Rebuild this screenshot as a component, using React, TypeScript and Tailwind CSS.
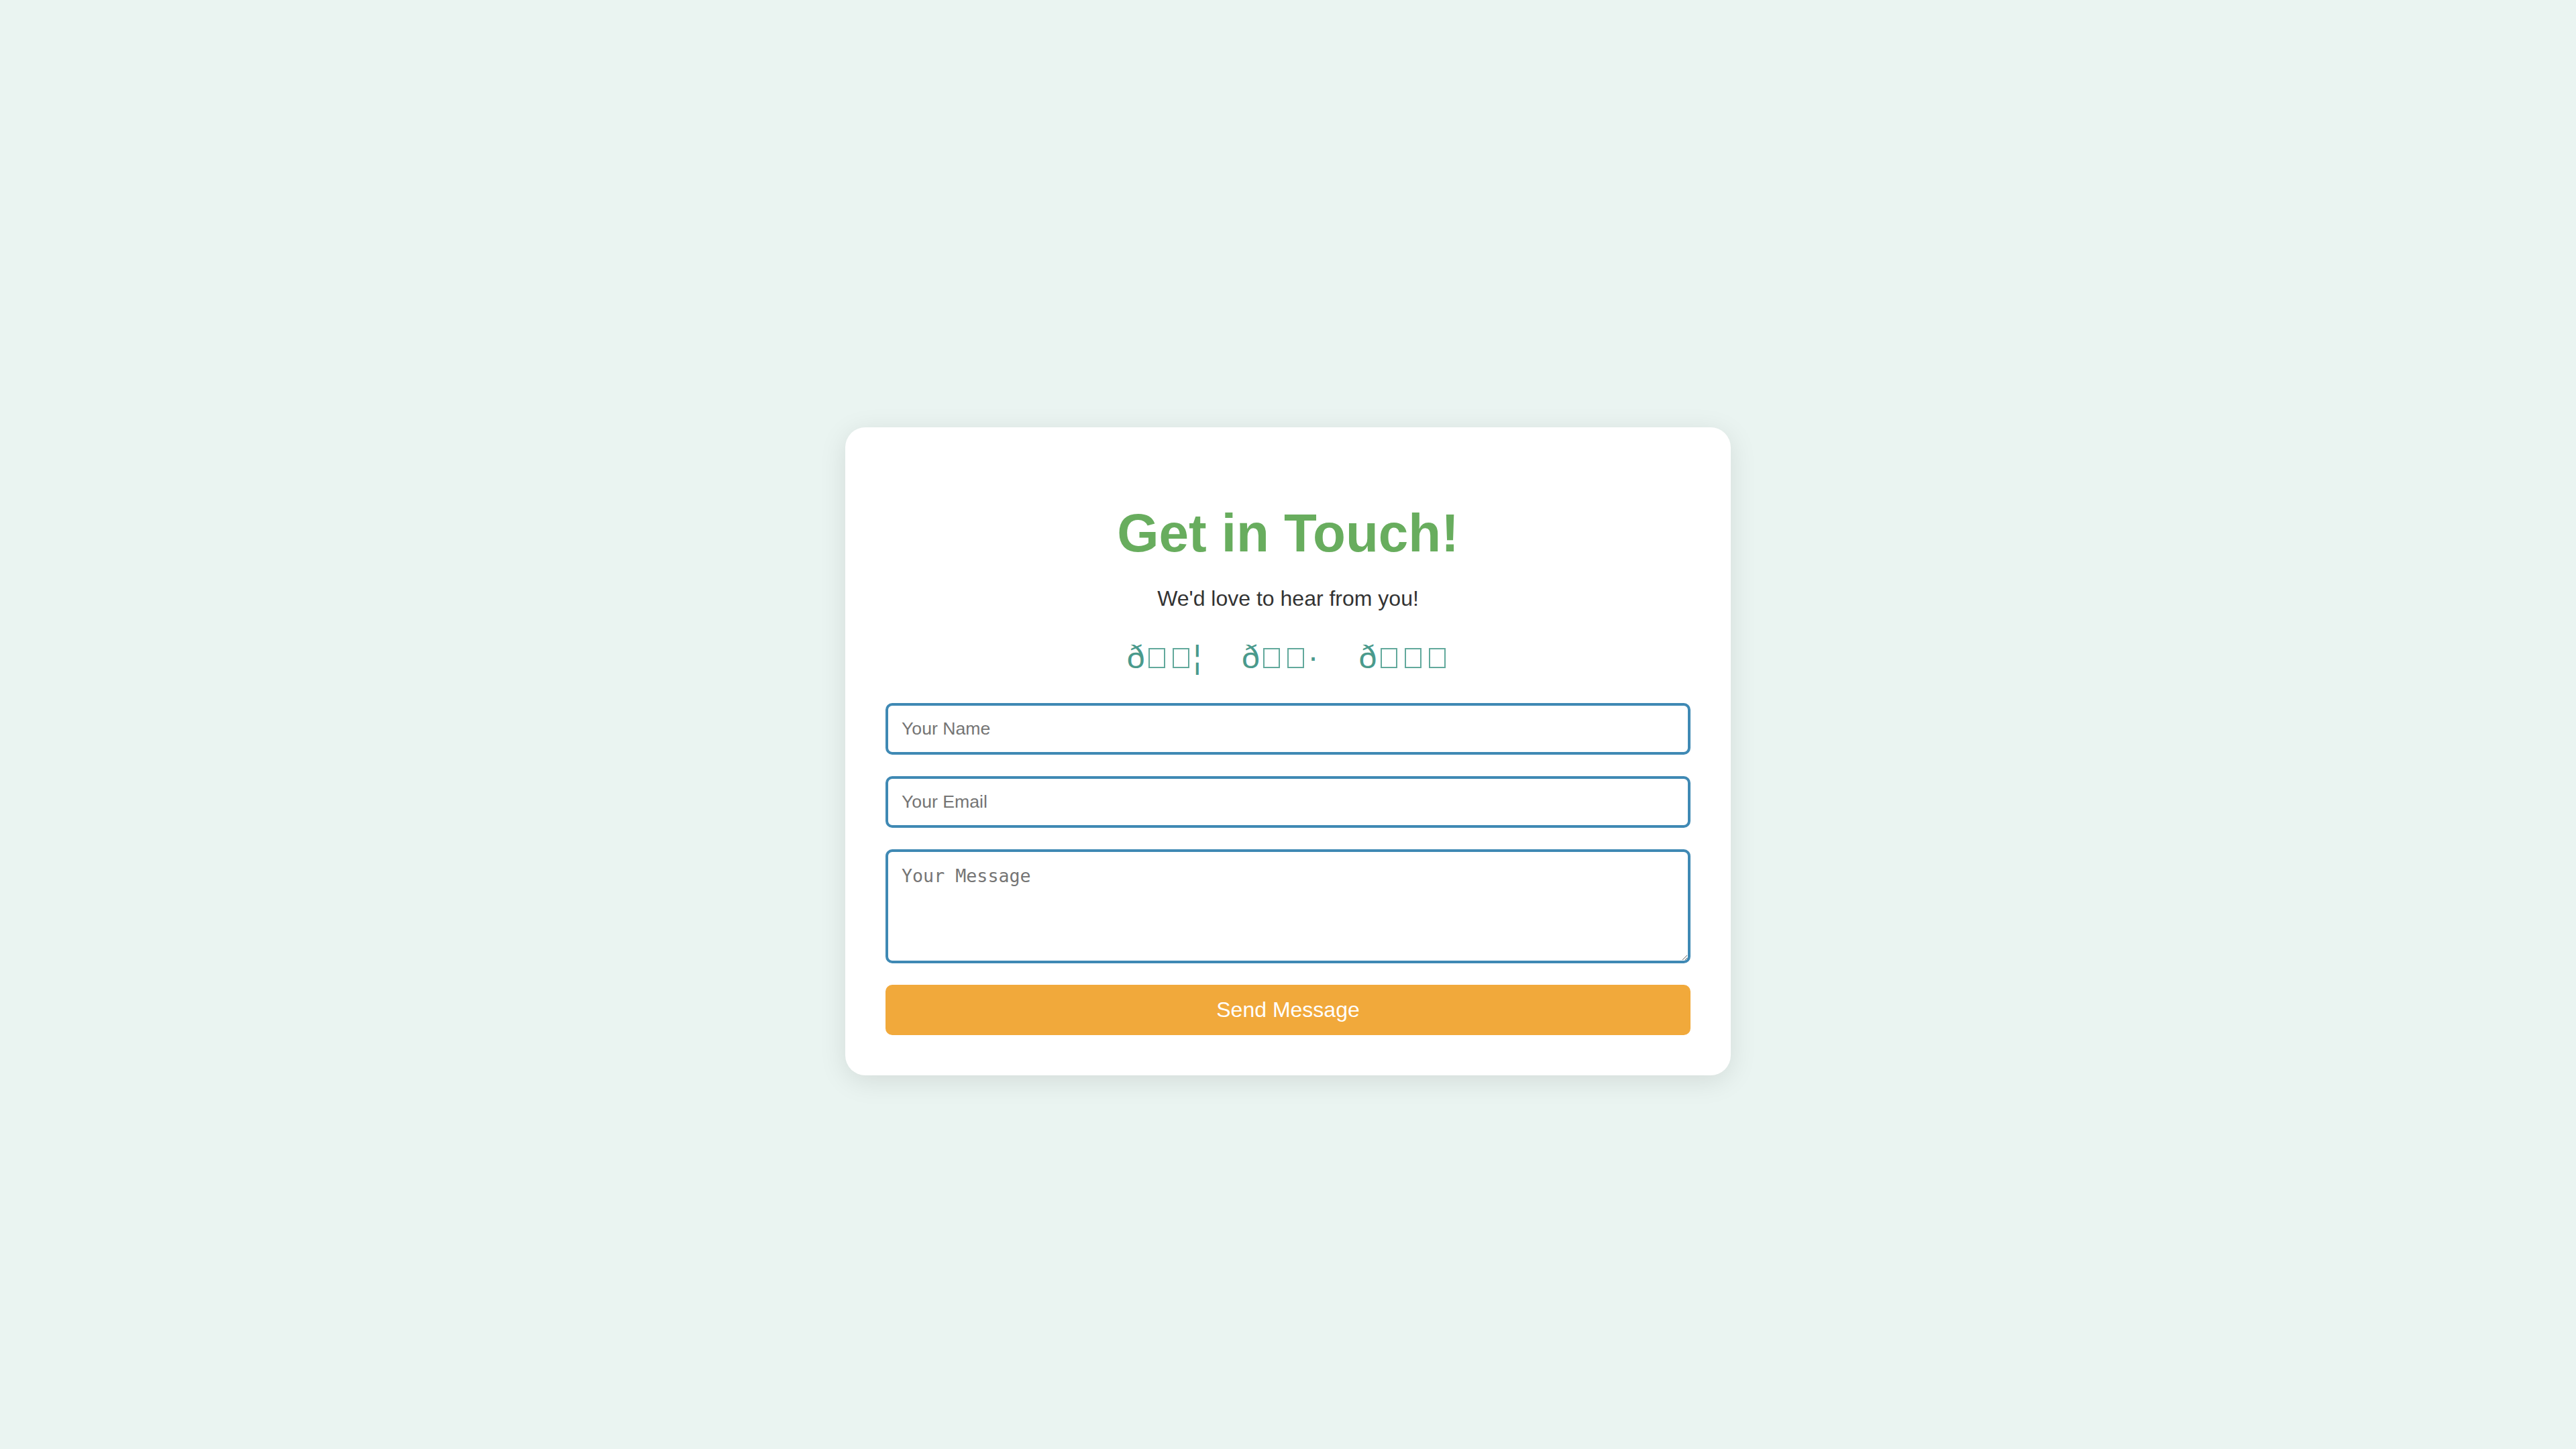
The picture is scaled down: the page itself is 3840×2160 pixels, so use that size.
import React from 'react'

// social icons came through as mojibake: "ð" + unprintable bytes (tofu boxes) + a trailing latin-1 char
const icons = [
    { boxes: 2, tail: '\u00a6' },
    { boxes: 2, tail: '\u00b7' },
    { boxes: 3, tail: '' },
]

const Tofu = () => (
    <span className="inline-block mx-[5.5px] w-[25px] h-[30px] border-[2px] border-[#62a99c]" />
)

export default function App() {
    return (
        <div className="min-h-screen bg-[#eaf4f1] flex items-center justify-center pt-[79px] font-['Liberation_Sans',Arial,sans-serif]">
            <div className="w-[1320px] bg-white rounded-[30px] p-[60px] text-center shadow-[0_8px_40px_rgba(0,0,0,0.1)]">
                <h1 className="mt-[52px] text-[80px] leading-[92px] font-bold text-[#68ad5e]">
                    Get in Touch!
                </h1>
                <p className="mt-[33px] text-[32px] leading-[37px] text-[#333333]">
                    We'd love to hear from you!
                </p>

                <div className="mt-[41px] flex justify-center gap-[60px] text-[48px] leading-[55px] text-[#4a9a8c]">
                    {icons.map((icon, i) => (
                        <span key={i} className="whitespace-nowrap">
                            {'\u00f0'}
                            {Array.from({ length: icon.boxes }).map((_, j) => (
                                <Tofu key={j} />
                            ))}
                            {icon.tail}
                        </span>
                    ))}
                </div>

                <form className="mt-[41px] flex flex-col gap-[32px]" onSubmit={e => e.preventDefault()}>
                    <input
                        type="text"
                        placeholder="Your Name"
                        className="h-[77px] w-full px-[20px] border-[4px] border-[#3f89b4] rounded-[10px] text-[26.67px] text-[#222] placeholder:text-[#757575] outline-none"
                    />
                    <input
                        type="email"
                        placeholder="Your Email"
                        className="h-[77px] w-full px-[20px] border-[4px] border-[#3f89b4] rounded-[10px] text-[26.67px] text-[#222] placeholder:text-[#757575] outline-none"
                    />
                    <textarea
                        placeholder="Your Message"
                        className="block h-[170px] w-full px-[20px] py-[20px] border-[4px] border-[#3f89b4] rounded-[10px] text-[26.67px] leading-[31px] font-['DejaVu_Sans_Mono',monospace] text-[#222] placeholder:text-[#757575] outline-none"
                    />
                    <button
                        type="submit"
                        className="h-[75px] w-full rounded-[10px] bg-[#f1a93b] text-[32px] text-white"
                    >
                        Send Message
                    </button>
                </form>
            </div>
        </div>
    )
}
